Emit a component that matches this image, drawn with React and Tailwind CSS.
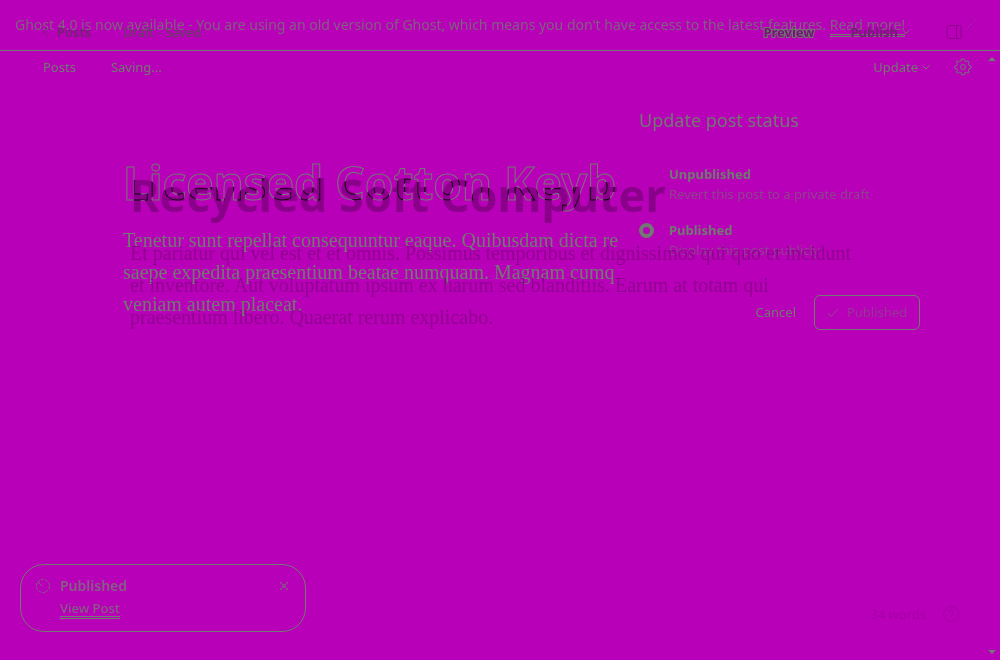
import React from "react";

const layer = "col-start-1 row-start-1 min-w-0";

function EditorBehind() {
  return (
    <section className={`${layer} flex flex-col text-[#8c008c]`}>
      <header className="flex items-center pt-[22px] pl-[42px] pr-[38px] text-[13px] leading-5">
        <a href="#posts" className="flex items-center gap-2 font-semibold text-[#702470]">
          <svg className="h-3 w-[7px]" viewBox="0 0 7 12" fill="none" stroke="currentColor"><path d="M5 2 1.500 6 5 10" /></svg>
          Posts
        </a>
        <span className="ml-8 text-[#5d475d]">Draft - Saved</span>
        <span className="flex-1" />
        <button className="font-bold text-[#7a107a] [-webkit-text-stroke:2px_#707a70] [paint-order:stroke]">Preview</button>
        <button className="ml-9 flex items-center gap-1 font-bold text-[#702070]">
          Publish
          <svg className="h-2 w-2" viewBox="0 0 8 8" fill="none" stroke="#707a70"><path d="M1 2.500 4 5.500 7 2.500" /></svg>
        </button>
        <button aria-label="Settings panel" className="ml-9">
          <svg className="h-4 w-4" viewBox="0 0 16 16" fill="none" stroke="currentColor"><rect x="1" y="1.500" width="14" height="13" rx="1.500" /><path d="M10.500 1.500v13" /></svg>
        </button>
      </header>
      <main className="flex-1 px-[130px] pt-[123px]">
        <h2 className="whitespace-nowrap text-[45px] font-bold leading-[60px] text-[#9c009c] mix-blend-color-burn">Recycled Soft Computer</h2>
        <p className="mt-3 max-w-[740px] font-['Liberation_Serif',serif] text-[20px] leading-8 text-[#910091]">
          Et pariatur qui vel est et et omnis. Possimus temporibus et dignissimos qui quo et incidunt et inventore. Aut voluptatum ipsum ex harum sed blanditiis. Earum at totam qui praesentium libero. Quaerat rerum explicabo.
        </p>
      </main>
      <footer className="flex items-center justify-end gap-4 pb-9 pr-10 text-[13px] leading-5 text-[#a500a5]">
        34 words
        <svg className="h-[18px] w-[18px]" viewBox="0 0 18 18" fill="none" stroke="currentColor"><circle cx="9" cy="9" r="7.500" /><path d="M6.500 7a2.500 2.500 0 1 1 3.500 2.300c-.8.400-1 .8-1 1.700M9 12.500v1" /></svg>
      </footer>
    </section>
  );
}

function StatusOption({ title, text, checked }) {
  return (
    <label className="flex gap-[15px]">
      <input type="radio" name="status" defaultChecked={checked} className="mt-[3px] h-[15px] w-[15px] shrink-0 appearance-none rounded-full border-transparent checked:border-4 checked:border-[#707a70]" />
      <span className="flex flex-col">
        <span className="text-[13px] font-bold leading-5">{title}</span>
        <span className="text-[13px] leading-5 text-[#8c448c]">{text}</span>
      </span>
    </label>
  );
}

function EditorFront() {
  return (
    <section className={`${layer} flex flex-col text-[#707a70]`}>
      <p className="h-[51px] whitespace-nowrap border-b border-[#707a70] pl-[15px] pt-[15px] text-[14px] leading-5 text-[#7e627e]">
        Ghost 4.0 is now available - You are using an old version of Ghost, which means you don't have access to the latest features. <a href="#more" className="border-b-[3px] border-double border-[#707a70] leading-4">Read more!</a>
      </p>
      <header className="flex items-center pl-[43px] pr-7 pt-[6px] text-[13px] leading-5">
        <a href="#posts">Posts</a>
        <span className="ml-[35px]">Saving...</span>
        <span className="flex-1" />
        <button className="flex items-center gap-1">
          Update
          <svg className="h-2 w-2" viewBox="0 0 8 8" fill="none" stroke="currentColor"><path d="M.5 2.500 4 6 7.500 2.500" /></svg>
        </button>
        <button aria-label="Settings" className="ml-6">
          <svg className="h-[18px] w-[18px]" viewBox="0 0 18 18" fill="none" stroke="currentColor"><path d="m7.500 1-.6 2-1.400.6-2-.9-1 1.300.9 2-.6 1.500-2 .6v2l2 .6.6 1.500-.9 2 1.300 1 1.800-1 1.500.6.5 2h2.600l.5-2 1.500-.6 1.800 1 1.300-1-.9-2 .6-1.500 2-.6v-2l-2-.6-.6-1.500.9-2-1.200-1.200-2 .9-1.300-.6-.6-2z" /><circle cx="9" cy="9" r="2.500" /></svg>
        </button>
      </header>
      <div className="flex flex-1">
        <main className="w-[62%] overflow-hidden pl-[123px] pt-[75px]">
          <h1 className="whitespace-nowrap text-[46px] font-bold leading-[60px] text-transparent [-webkit-text-stroke:1px_#707a70]">Licensed Cotton Keyb</h1>
          <p className="mt-3 whitespace-nowrap font-['Liberation_Serif',serif] text-[20px] leading-8">
            Tenetur sunt repellat consequuntur eaque. Quibusdam dicta re<br />
            saepe expedita praesentium beatae numquam. Magnam cumq<br />
            veniam autem placeat.
          </p>
        </main>
        <form className="w-[300px] pl-[19px] pt-[29px]">
          <h3 className="text-[18px] leading-7">Update post status</h3>
          <div className="mt-[30px] flex flex-col gap-4">
            <StatusOption title="Unpublished" text="Revert this post to a private draft" />
            <StatusOption title="Published" text="Display this post publicly" checked />
          </div>
          <div className="mt-[35px] flex items-center justify-end gap-[18px] text-[13px]">
            <button type="button">Cancel</button>
            <button type="button" className="flex h-[35px] w-[106px] items-center justify-center gap-2 rounded-md border border-[#707a70] text-[#943894]">
              <svg className="h-3 w-3" viewBox="0 0 12 12" fill="none" stroke="#8c4c8c"><path d="m1 6 3 3.500L11 2" /></svg>
              Published
            </button>
          </div>
        </form>
      </div>
      <aside className="mb-7 ml-5 flex h-[68px] w-[286px] gap-[9px] rounded-[24px] border border-[#707a70] px-[14px] pt-[10px] leading-[22px]">
        <svg className="mt-[3px] h-4 w-4" viewBox="0 0 16 16" fill="none" stroke="#7e627e"><circle cx="8" cy="8" r="6.500" strokeDasharray="3 1" /><path d="m3 4 4 4" /></svg>
        <div className="flex flex-1 flex-col items-start gap-[3px] text-[#846084]">
          <strong className="text-[14px] font-semibold">Published</strong>
          <a href="#post" className="border-b-[3px] border-double border-[#707a70] text-[13px] font-medium leading-4">View Post</a>
        </div>
        <button aria-label="Close" className="mr-[3px] h-[22px]">
          <svg className="h-2 w-2" viewBox="0 0 8 8" stroke="#7e627e" strokeWidth="1.500" strokeDasharray="2 1"><path d="m0 0 8 8M8 0 0 8" /></svg>
        </button>
      </aside>
    </section>
  );
}

export default function App() {
  return (
    <div className="grid min-h-screen grid-cols-1 overflow-hidden bg-[#b800b8] font-['Noto_Sans',sans-serif]">
      <EditorFront />
      <EditorBehind />
      <div className={`${layer} pointer-events-none flex flex-col items-end justify-between pb-1 pr-1 pt-[55px] text-[#707a70]`}>
        <svg className="h-2 w-2" viewBox="0 0 8 8" fill="currentColor"><path d="m4 2 4 4H0z" /></svg>
        <svg className="h-2 w-2" viewBox="0 0 8 8" fill="currentColor"><path d="M0 2h8L4 6z" /></svg>
      </div>
      <div className={`${layer} pointer-events-none flex justify-end pr-[22px] pt-[18px]`}>
        <svg className="h-3 w-3" viewBox="0 0 12 12" fill="none" stroke="#8c4c8c" strokeDasharray="1 2"><path d="M0 11 11 0" /></svg>
      </div>
    </div>
  );
}
